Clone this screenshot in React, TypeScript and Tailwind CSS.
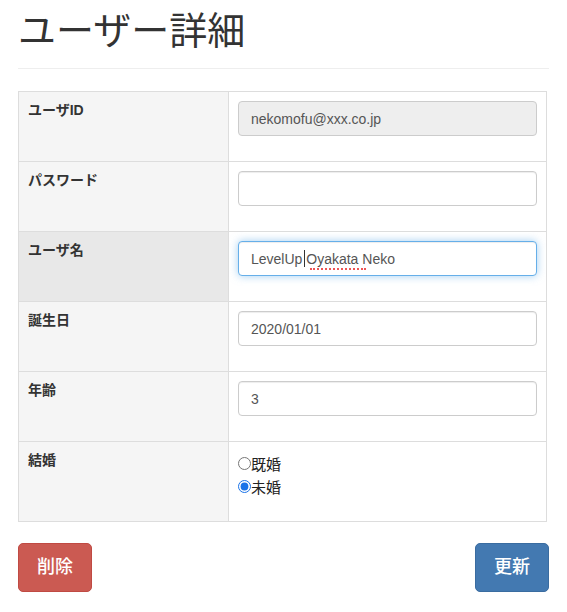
import React from "react";

const FONT = '"Liberation Sans", "Noto Sans CJK JP", sans-serif';

function Row({ label, shade = "bg-[#f5f5f5]", h = "h-[70px]", children }: { label: string; shade?: string; h?: string; children: React.ReactNode }) {
  return (
    <tr className={`${h} border-t border-[#ddd] first:border-t-0`}>
      <td className={`w-[211px] border-r border-[#ddd] ${shade} align-top px-[9px] pt-[8px] text-[14px] font-bold leading-[20px] text-[#333]`}>{label}</td>
      <td className="align-top px-[9px] pt-[9px]">{children}</td>
    </tr>
  );
}

function Input({ value, disabled, focus }: { value?: string; disabled?: boolean; focus?: boolean }) {
  const base = "w-[299px] h-[35px] rounded-[4px] border px-[12px] text-[14px] text-[#555] outline-none";
  const look = disabled
    ? "bg-[#eee] border-[#ccc]"
    : focus
    ? "bg-white border-[#66afe9] shadow-[inset_0_1px_1px_rgba(0,0,0,0.075),0_0_8px_rgba(102,175,233,0.6)]"
    : "bg-white border-[#ccc] shadow-[inset_0_1px_1px_rgba(0,0,0,0.075)]";
  return <input className={`${base} ${look}`} style={{ fontFamily: FONT }} defaultValue={value} disabled={disabled} readOnly />;
}

export default function App() {
  return (
    <div className="bg-white min-h-screen px-[18px] text-[#333]" style={{ fontFamily: FONT }}>
      <h1 className="pt-[8px] pb-[20px] text-[38px] leading-[40px] font-normal text-[#333] border-b border-[#eee]" style={{ fontFamily: '"Noto Sans CJK JP", sans-serif' }}>
        ユーザー詳細
      </h1>
      <table className="mt-[22px] w-[529px] border border-[#ddd] border-collapse">
        <tbody>
          <Row label="ユーザID">
            <Input value="nekomofu@xxx.co.jp" disabled />
          </Row>
          <Row label="パスワード">
            <Input />
          </Row>
          <Row label="ユーザ名" shade="bg-[#e8e8e8]">
            <div className="relative w-[299px]">
              <Input value="LevelUp Oyakata Neko" focus />
              <span className="pointer-events-none absolute left-[66px] top-[9px] h-[17px] w-px bg-[#333]" />
              <span className="pointer-events-none absolute left-[72px] top-[27px] w-[56px] border-b-2 border-dotted border-[#e55]" />
            </div>
          </Row>
          <Row label="誕生日">
            <Input value="2020/01/01" />
          </Row>
          <Row label="年齢">
            <Input value="3" />
          </Row>
          <Row label="結婚" h="h-[80px]">
            <div className="flex flex-col pt-[1px] text-[15px] leading-[23px] text-[#222]" style={{ fontFamily: '"Noto Sans CJK JP", sans-serif' }}>
              <label className="flex items-center">
                <input type="radio" name="m" className="m-0 w-[13px] h-[13px]" />
                <span>既婚</span>
              </label>
              <label className="flex items-center">
                <input type="radio" name="m" defaultChecked className="m-0 w-[13px] h-[13px] accent-[#1a73e8]" />
                <span>未婚</span>
              </label>
            </div>
          </Row>
        </tbody>
      </table>
      <div className="mt-[21px] flex w-[531px] justify-between">
        <button className="h-[49px] w-[74px] rounded-[5px] border border-[#c04a43] bg-[#cb5a52] text-[18px] font-medium text-white">削除</button>
        <button className="h-[49px] w-[74px] rounded-[5px] border border-[#3a6ca0] bg-[#4379b1] text-[18px] font-medium text-white">更新</button>
      </div>
    </div>
  );
}
